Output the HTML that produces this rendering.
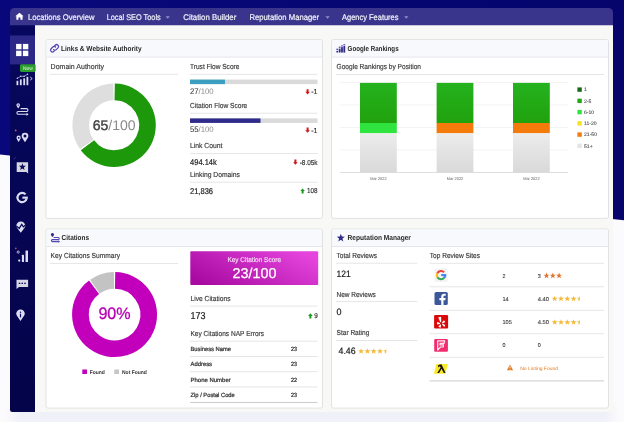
<!DOCTYPE html>
<html><head><meta charset="utf-8"><title>Dashboard</title>
<style>
html,body{margin:0;padding:0;width:624px;height:422px;overflow:hidden;background:#fbfbfd}
svg{display:block;position:absolute;left:0;top:0;will-change:transform}
text{font-family:"Liberation Sans",sans-serif;white-space:pre;text-rendering:geometricPrecision}
</style></head><body>
<svg width="624" height="422" viewBox="0 0 624 422">
<defs>
<linearGradient id="bgg" x1="0" x2="1" y1="0" y2="0"><stop offset="0" stop-color="#08087c"/><stop offset="1" stop-color="#05056c"/></linearGradient>
<linearGradient id="mg" x1="0" x2="1" y1=".75" y2=".25"><stop offset="0" stop-color="#a80aa2"/><stop offset="1" stop-color="#e545dc"/></linearGradient>
<linearGradient id="sb" x1="0" x2="0" y1="0" y2="1"><stop offset="0" stop-color="#07075e"/><stop offset="1" stop-color="#04044a"/></linearGradient>
<linearGradient id="gr" x1="0" x2="0" y1="0" y2="1"><stop offset="0" stop-color="#ececec"/><stop offset="1" stop-color="#d9d9d9"/></linearGradient>
<linearGradient id="gg" x1="0" x2="0" y1="0" y2="1"><stop offset="0" stop-color="#25b21f"/><stop offset="1" stop-color="#20a20c"/></linearGradient>
<filter id="bl" filterUnits="userSpaceOnUse" x="-10" y="-10" width="644" height="442" color-interpolation-filters="sRGB"><feConvolveMatrix order="3" kernelMatrix="0.03 0.11 0.03 0.11 0.44 0.11 0.03 0.11 0.03" edgeMode="duplicate" preserveAlpha="true"/></filter>
<filter id="sh" x="-5%" y="-5%" width="110%" height="115%"><feGaussianBlur stdDeviation="4"/></filter>
<clipPath id="wc"><path d="M10 409.500V12a4 4 0 0 1 4-4h595a4 4 0 0 1 4 4v397.500a2.500 2.500 0 0 1-2.500 2.500h-598a2.500 2.500 0 0 1-2.500-2.500z"/></clipPath>
</defs>

<g>
<rect x="-10" y="-10" width="644" height="442" fill="#fbfbfd"/>
<polygon points="-10,-10 634,-10 634,221.250 -10,153.450" fill="url(#bgg)"/>
<rect x="12" y="404" width="600" height="22" fill="#b8b8de" opacity=".16" filter="url(#sh)"/>
<path d="M35 25H613V409.500a2.500 2.500 0 0 1-2.500 2.500H35z" fill="#f8f8f6"/>
<path d="M10 25H35V412H12.500a2.500 2.500 0 0 1-2.500-2.500z" fill="url(#sb)"/>
<path d="M10 25.200V12.500a4.500 4.500 0 0 1 4.500-4.500H608.500a4.500 4.500 0 0 1 4.500 4.500V25.200z" fill="#39358d"/>
<rect x="10.00" y="35.40" width="25.00" height="29.00" fill="#2b2888"/>
<text x="28.00" y="19.97" font-size="8.2" fill="#f2f2fb" font-weight="400" textLength="66.50" lengthAdjust="spacingAndGlyphs" stroke="#f2f2fb" stroke-width=".2">Locations Overview</text>
<text x="106.70" y="19.97" font-size="8.2" fill="#f2f2fb" font-weight="400" textLength="54.00" lengthAdjust="spacingAndGlyphs" stroke="#f2f2fb" stroke-width=".2">Local SEO Tools</text>
<text x="183.30" y="19.97" font-size="8.2" fill="#f2f2fb" font-weight="400" textLength="53.00" lengthAdjust="spacingAndGlyphs" stroke="#f2f2fb" stroke-width=".2">Citation Builder</text>
<text x="249.40" y="19.97" font-size="8.2" fill="#f2f2fb" font-weight="400" textLength="69.80" lengthAdjust="spacingAndGlyphs" stroke="#f2f2fb" stroke-width=".2">Reputation Manager</text>
<text x="342.10" y="19.97" font-size="8.2" fill="#f2f2fb" font-weight="400" textLength="56.40" lengthAdjust="spacingAndGlyphs" stroke="#f2f2fb" stroke-width=".2">Agency Features</text>
<path d="M165.5 16.2h4.4l-2.2 2.6z" fill="#8e8bc8"/>
<path d="M325.40000000000003 16.2h4.4l-2.2 2.6z" fill="#8e8bc8"/>
<path d="M404.1 16.2h4.4l-2.2 2.6z" fill="#8e8bc8"/>
<path d="M19.45 12.7l4.1 3.6h-1v3.5h-2.1v-2.3h-2v2.3h-2.1v-3.5h-1z" fill="#fff"/>
<rect x="46" y="39.6" width="276.5" height="178.8" rx="2" fill="#fff" stroke="#e2e2e2" stroke-width="1"/>
<path d="M46.5 57.1V41.6a1.5 1.5 0 0 1 1.5-1.5H320.5a1.5 1.5 0 0 1 1.5 1.5V57.1z" fill="#f8f9fc"/>
<rect x="46.50" y="56.65" width="275.50" height="0.90" fill="#e4e4e8"/>
<rect x="331.5" y="39.6" width="277" height="178.8" rx="2" fill="#fff" stroke="#e2e2e2" stroke-width="1"/>
<path d="M332.0 57.1V41.6a1.5 1.5 0 0 1 1.5-1.5H606.5a1.5 1.5 0 0 1 1.5 1.5V57.1z" fill="#f8f9fc"/>
<rect x="332.00" y="56.65" width="276.00" height="0.90" fill="#e4e4e8"/>
<rect x="46" y="229" width="276.5" height="179.1" rx="2" fill="#fff" stroke="#e2e2e2" stroke-width="1"/>
<path d="M46.5 246.5V231a1.5 1.5 0 0 1 1.5-1.5H320.5a1.5 1.5 0 0 1 1.5 1.5V246.5z" fill="#f8f9fc"/>
<rect x="46.50" y="246.05" width="275.50" height="0.90" fill="#e4e4e8"/>
<rect x="331.5" y="229" width="277" height="179.1" rx="2" fill="#fff" stroke="#e2e2e2" stroke-width="1"/>
<path d="M332.0 246.5V231a1.5 1.5 0 0 1 1.5-1.5H606.5a1.5 1.5 0 0 1 1.5 1.5V246.5z" fill="#f8f9fc"/>
<rect x="332.00" y="246.05" width="276.00" height="0.90" fill="#e4e4e8"/>
<text x="61.10" y="51.05" font-size="7.3" fill="#262626" font-weight="700" textLength="80.50" lengthAdjust="spacingAndGlyphs">Links &amp; Website Authority</text>
<text x="50.60" y="69.25" font-size="7.3" fill="#3a3a3a" font-weight="400" textLength="53.40" lengthAdjust="spacingAndGlyphs" stroke="#3a3a3a" stroke-width="0.16">Domain Authority</text>
<rect x="50.00" y="73.85" width="128.00" height="0.90" fill="#e3e3e3"/>
<text x="190.00" y="69.25" font-size="7.3" fill="#3a3a3a" font-weight="400" textLength="49.40" lengthAdjust="spacingAndGlyphs" stroke="#3a3a3a" stroke-width="0.16">Trust Flow Score</text>
<rect x="190.00" y="73.85" width="127.50" height="0.90" fill="#e3e3e3"/>
<text x="190.00" y="108.35" font-size="7.3" fill="#3a3a3a" font-weight="400" textLength="57.30" lengthAdjust="spacingAndGlyphs" stroke="#3a3a3a" stroke-width="0.16">Citation Flow Score</text>
<rect x="190.00" y="112.75" width="127.50" height="0.90" fill="#e3e3e3"/>
<text x="190.00" y="148.16" font-size="7.3" fill="#3a3a3a" font-weight="400" textLength="32.50" lengthAdjust="spacingAndGlyphs" stroke="#3a3a3a" stroke-width="0.16">Link Count</text>
<rect x="190.00" y="153.15" width="127.50" height="0.90" fill="#e3e3e3"/>
<text x="190.00" y="177.06" font-size="7.3" fill="#3a3a3a" font-weight="400" textLength="50.00" lengthAdjust="spacingAndGlyphs" stroke="#3a3a3a" stroke-width="0.16">Linking Domains</text>
<rect x="190.00" y="181.75" width="127.50" height="0.90" fill="#e3e3e3"/>
<rect x="190.00" y="79.60" width="127.50" height="4.50" fill="#dadada"/>
<rect x="190.00" y="79.60" width="35.00" height="4.50" fill="#3c9fc2"/>
<rect x="190.00" y="118.40" width="127.50" height="4.50" fill="#dadada"/>
<rect x="190.00" y="118.40" width="70.50" height="4.50" fill="#2f2b8a"/>
<text x="190" y="93.90" font-size="8" textLength="23.7" lengthAdjust="spacingAndGlyphs"><tspan fill="#2a2a2a">27</tspan><tspan fill="#8a8a8a">/100</tspan></text>
<text x="190" y="132.30" font-size="8" textLength="23.7" lengthAdjust="spacingAndGlyphs"><tspan fill="#2a2a2a">55</tspan><tspan fill="#8a8a8a">/100</tspan></text>
<text x="190.00" y="164.91" font-size="8.3" fill="#222" font-weight="400" textLength="26.80" lengthAdjust="spacingAndGlyphs" stroke="#222" stroke-width="0.2">494.14k</text>
<text x="190.00" y="193.71" font-size="8.3" fill="#222" font-weight="400" textLength="23.00" lengthAdjust="spacingAndGlyphs" stroke="#222" stroke-width="0.2">21,836</text>
<path d="M307.6 94.39999999999999l2.3-2.6h-1.3v-2.6h-2v2.6h-1.3z" fill="#d01818"/>
<text x="311.20" y="94.12" font-size="7.2" fill="#333" font-weight="400" textLength="6.30" lengthAdjust="spacingAndGlyphs" stroke="#333" stroke-width="0.16">-1</text>
<path d="M307.6 132.79999999999998l2.3-2.6h-1.3v-2.6h-2v2.6h-1.3z" fill="#d01818"/>
<text x="311.20" y="132.52" font-size="7.2" fill="#333" font-weight="400" textLength="6.30" lengthAdjust="spacingAndGlyphs" stroke="#333" stroke-width="0.16">-1</text>
<path d="M295.4 164.79999999999998l2.3-2.6h-1.3v-2.6h-2v2.6h-1.3z" fill="#d01818"/>
<text x="299.70" y="164.52" font-size="7.2" fill="#333" font-weight="400" textLength="17.80" lengthAdjust="spacingAndGlyphs" stroke="#333" stroke-width="0.16">-8.05k</text>
<path d="M302.6 188.4l2.3 2.6h-1.3v2.6h-2v-2.6h-1.3z" fill="#1e9a1e"/>
<text x="307.00" y="193.32" font-size="7.2" fill="#333" font-weight="400" textLength="10.50" lengthAdjust="spacingAndGlyphs" stroke="#333" stroke-width="0.16">108</text>
<path d="M114.68 91.86A33.35 33.35 0 1 1 87.47 145.27" fill="none" stroke="#1c980a" stroke-width="16.7"/>
<path d="M86.78 144.33A33.35 33.35 0 0 1 113.52 91.86" fill="none" stroke="#dedede" stroke-width="16.7"/>
<text x="92.7" y="130.1" font-size="14" textLength="43" lengthAdjust="spacingAndGlyphs"><tspan fill="#444" stroke="#444" stroke-width=".45">65</tspan><tspan fill="#8a8a8a">/100</tspan></text>
<text x="347.60" y="51.05" font-size="7.3" fill="#262626" font-weight="700" textLength="51.00" lengthAdjust="spacingAndGlyphs">Google Rankings</text>
<text x="336.60" y="69.25" font-size="7.3" fill="#3a3a3a" font-weight="400" textLength="84.40" lengthAdjust="spacingAndGlyphs" stroke="#3a3a3a" stroke-width="0.16">Google Rankings by Position</text>
<rect x="336.00" y="73.95" width="268.00" height="0.90" fill="#e3e3e3"/>
<rect x="340.00" y="82.10" width="228.00" height="0.80" fill="#f0f0f0"/>
<rect x="340.00" y="104.60" width="228.00" height="0.80" fill="#f0f0f0"/>
<rect x="340.00" y="127.10" width="228.00" height="0.80" fill="#f0f0f0"/>
<rect x="340.00" y="149.60" width="228.00" height="0.80" fill="#f0f0f0"/>
<rect x="340.00" y="172.20" width="228.00" height="0.80" fill="#d6d6d6"/>
<rect x="360.00" y="82.90" width="36.80" height="40.20" fill="url(#gg)"/>
<rect x="360.00" y="123.00" width="36.80" height="10.30" fill="#2fe43e"/>
<rect x="360.00" y="133.30" width="36.80" height="39.20" fill="url(#gr)"/>
<text x="370.20" y="180.03" font-size="4.1" fill="#5a5a5a" font-weight="400" textLength="16.40" lengthAdjust="spacingAndGlyphs" stroke="none">Mar 2022</text>
<rect x="436.60" y="82.90" width="36.80" height="40.20" fill="url(#gg)"/>
<rect x="436.60" y="123.00" width="36.80" height="10.30" fill="#f57a0c"/>
<rect x="436.60" y="133.30" width="36.80" height="39.20" fill="url(#gr)"/>
<text x="446.80" y="180.03" font-size="4.1" fill="#5a5a5a" font-weight="400" textLength="16.40" lengthAdjust="spacingAndGlyphs" stroke="none">Mar 2022</text>
<rect x="513.00" y="82.90" width="36.80" height="40.20" fill="url(#gg)"/>
<rect x="513.00" y="123.00" width="36.80" height="10.30" fill="#f57a0c"/>
<rect x="513.00" y="133.30" width="36.80" height="39.20" fill="url(#gr)"/>
<text x="523.20" y="180.03" font-size="4.1" fill="#5a5a5a" font-weight="400" textLength="16.40" lengthAdjust="spacingAndGlyphs" stroke="none">Mar 2022</text>
<rect x="577.40" y="87.40" width="4.40" height="4.40" fill="#176b17"/>
<text x="584.00" y="91.38" font-size="5.1" fill="#444" font-weight="400" stroke="#444" stroke-width=".08">1</text>
<rect x="577.40" y="98.65" width="4.40" height="4.40" fill="#22a61a"/>
<text x="584.00" y="102.63" font-size="5.1" fill="#444" font-weight="400" stroke="#444" stroke-width=".08">2-5</text>
<rect x="577.40" y="109.90" width="4.40" height="4.40" fill="#2fe43e"/>
<text x="584.00" y="113.88" font-size="5.1" fill="#444" font-weight="400" stroke="#444" stroke-width=".08">6-10</text>
<rect x="577.40" y="121.15" width="4.40" height="4.40" fill="#f6e21e"/>
<text x="584.00" y="125.13" font-size="5.1" fill="#444" font-weight="400" stroke="#444" stroke-width=".08">11-20</text>
<rect x="577.40" y="132.40" width="4.40" height="4.40" fill="#f57a0c"/>
<text x="584.00" y="136.38" font-size="5.1" fill="#444" font-weight="400" stroke="#444" stroke-width=".08">21-50</text>
<rect x="577.40" y="143.65" width="4.40" height="4.40" fill="#e4e4e4"/>
<text x="584.00" y="147.63" font-size="5.1" fill="#444" font-weight="400" stroke="#444" stroke-width=".08">51+</text>
<text x="61.60" y="240.16" font-size="7.3" fill="#262626" font-weight="700" textLength="27.40" lengthAdjust="spacingAndGlyphs">Citations</text>
<text x="50.60" y="258.45" font-size="7.3" fill="#3a3a3a" font-weight="400" textLength="69.40" lengthAdjust="spacingAndGlyphs" stroke="#3a3a3a" stroke-width="0.16">Key Citations Summary</text>
<rect x="50.00" y="263.15" width="128.00" height="0.90" fill="#e3e3e3"/>
<path d="M115.09 280.45A34.15 34.15 0 1 1 94.05 287.29" fill="none" stroke="#c200bc" stroke-width="16.7"/>
<path d="M94.91 286.66A34.15 34.15 0 0 1 114.01 280.45" fill="none" stroke="#c3c3c3" stroke-width="16.7"/>
<text x="98.40" y="319.07" font-size="16.5" fill="#b800b4" font-weight="400" textLength="32.30" lengthAdjust="spacingAndGlyphs" stroke="#b800b4" stroke-width=".3">90%</text>
<rect x="82.30" y="369.50" width="4.70" height="4.50" fill="#c200bc"/>
<text x="89.80" y="373.99" font-size="5.4" fill="#333" font-weight="700" textLength="15.10" lengthAdjust="spacingAndGlyphs">Found</text>
<rect x="114.30" y="369.50" width="4.70" height="4.50" fill="#c6c6c6"/>
<text x="122.00" y="373.99" font-size="5.4" fill="#333" font-weight="700" textLength="24.90" lengthAdjust="spacingAndGlyphs">Not Found</text>
<rect x="190.30" y="251.30" width="127.90" height="33.70" fill="url(#mg)" rx="1"/>
<text x="227.40" y="262.18" font-size="6.8" fill="#f8dcf6" font-weight="400" textLength="53.60" lengthAdjust="spacingAndGlyphs" stroke="#f8dcf6" stroke-width="0.16">Key Citation Score</text>
<text x="232.50" y="278.17" font-size="14.2" fill="#fff" font-weight="400" textLength="43.90" lengthAdjust="spacingAndGlyphs" stroke="#fff" stroke-width=".25">23/100</text>
<text x="190.50" y="301.45" font-size="7.3" fill="#3a3a3a" font-weight="400" textLength="40.00" lengthAdjust="spacingAndGlyphs" stroke="#3a3a3a" stroke-width="0.16">Live Citations</text>
<rect x="190.00" y="305.65" width="127.50" height="0.90" fill="#e3e3e3"/>
<text x="190.60" y="319.10" font-size="10" fill="#222" font-weight="400" textLength="15.00" lengthAdjust="spacingAndGlyphs" stroke="#222" stroke-width="0.2">173</text>
<path d="M310.4 313.29999999999995l2.3 2.6h-1.3v2.6h-2v-2.6h-1.3z" fill="#1e9a1e"/>
<text x="314.20" y="318.22" font-size="7.2" fill="#333" font-weight="400" textLength="3.50" lengthAdjust="spacingAndGlyphs" stroke="#333" stroke-width="0.16">9</text>
<text x="190.50" y="335.75" font-size="7.3" fill="#3a3a3a" font-weight="400" textLength="73.50" lengthAdjust="spacingAndGlyphs" stroke="#3a3a3a" stroke-width="0.16">Key Citations NAP Errors</text>
<rect x="190.00" y="340.75" width="127.50" height="0.90" fill="#e3e3e3"/>
<text x="190.50" y="351.10" font-size="6" fill="#2e2e2e" font-weight="400" textLength="40.50" lengthAdjust="spacingAndGlyphs" stroke="#2e2e2e" stroke-width="0.22">Business Name</text>
<text x="291.00" y="351.10" font-size="6" fill="#2e2e2e" font-weight="400" textLength="6.00" lengthAdjust="spacingAndGlyphs" stroke="#2e2e2e" stroke-width="0.22">23</text>
<rect x="190.00" y="356.05" width="127.50" height="0.90" fill="#e3e3e3"/>
<text x="190.50" y="366.35" font-size="6" fill="#2e2e2e" font-weight="400" textLength="21.50" lengthAdjust="spacingAndGlyphs" stroke="#2e2e2e" stroke-width="0.22">Address</text>
<text x="291.00" y="366.35" font-size="6" fill="#2e2e2e" font-weight="400" textLength="6.00" lengthAdjust="spacingAndGlyphs" stroke="#2e2e2e" stroke-width="0.22">23</text>
<rect x="190.00" y="371.30" width="127.50" height="0.90" fill="#e3e3e3"/>
<text x="190.50" y="381.60" font-size="6" fill="#2e2e2e" font-weight="400" textLength="40.20" lengthAdjust="spacingAndGlyphs" stroke="#2e2e2e" stroke-width="0.22">Phone Number</text>
<text x="291.00" y="381.60" font-size="6" fill="#2e2e2e" font-weight="400" textLength="6.00" lengthAdjust="spacingAndGlyphs" stroke="#2e2e2e" stroke-width="0.22">22</text>
<rect x="190.00" y="386.55" width="127.50" height="0.90" fill="#e3e3e3"/>
<text x="190.50" y="396.85" font-size="6" fill="#2e2e2e" font-weight="400" textLength="44.30" lengthAdjust="spacingAndGlyphs" stroke="#2e2e2e" stroke-width="0.22">Zip / Postal Code</text>
<text x="291.00" y="396.85" font-size="6" fill="#2e2e2e" font-weight="400" textLength="6.00" lengthAdjust="spacingAndGlyphs" stroke="#2e2e2e" stroke-width="0.22">23</text>
<rect x="190.00" y="401.95" width="127.50" height="1.10" fill="#cfcfcf"/>
<text x="347.60" y="240.25" font-size="7.3" fill="#262626" font-weight="700" textLength="63.30" lengthAdjust="spacingAndGlyphs">Reputation Manager</text>
<text x="336.60" y="258.25" font-size="7.3" fill="#3a3a3a" font-weight="400" textLength="40.40" lengthAdjust="spacingAndGlyphs" stroke="#3a3a3a" stroke-width="0.16">Total Reviews</text>
<rect x="336.00" y="262.75" width="81.30" height="0.90" fill="#e3e3e3"/>
<text x="336.60" y="276.52" font-size="9.2" fill="#222" font-weight="400" textLength="14.20" lengthAdjust="spacingAndGlyphs" stroke="#222" stroke-width="0.2">121</text>
<text x="336.60" y="296.75" font-size="7.3" fill="#3a3a3a" font-weight="400" textLength="39.20" lengthAdjust="spacingAndGlyphs" stroke="#3a3a3a" stroke-width="0.16">New Reviews</text>
<rect x="336.00" y="301.15" width="81.30" height="0.90" fill="#e3e3e3"/>
<text x="336.60" y="314.72" font-size="9.2" fill="#222" font-weight="400" textLength="5.00" lengthAdjust="spacingAndGlyphs" stroke="#222" stroke-width="0.2">0</text>
<text x="336.60" y="335.36" font-size="7.3" fill="#3a3a3a" font-weight="400" textLength="32.70" lengthAdjust="spacingAndGlyphs" stroke="#3a3a3a" stroke-width="0.16">Star Rating</text>
<rect x="336.00" y="340.05" width="81.30" height="0.90" fill="#e3e3e3"/>
<text x="338.50" y="354.42" font-size="9.2" fill="#1c1c1c" font-weight="400" textLength="17.10" lengthAdjust="spacingAndGlyphs" stroke="#1c1c1c" stroke-width="0.2">4.46</text>
<text x="429.80" y="258.25" font-size="7.3" fill="#3a3a3a" font-weight="400" textLength="50.20" lengthAdjust="spacingAndGlyphs" stroke="#3a3a3a" stroke-width="0.16">Top Review Sites</text>
<rect x="429.50" y="262.85" width="174.50" height="0.90" fill="#e3e3e3"/>
<rect x="429.50" y="286.35" width="174.50" height="0.90" fill="#e3e3e3"/>
<rect x="429.50" y="309.85" width="174.50" height="0.90" fill="#e3e3e3"/>
<rect x="429.50" y="333.25" width="174.50" height="0.90" fill="#e3e3e3"/>
<rect x="429.50" y="356.85" width="174.50" height="0.90" fill="#e3e3e3"/>
<rect x="429.50" y="380.35" width="174.50" height="1.10" fill="#cfcfcf"/>
<path d="M361.10 348.20L361.87 350.25L364.05 350.34L362.34 351.70L362.92 353.81L361.10 352.60L359.28 353.81L359.86 351.70L358.15 350.34L360.33 350.25z" fill="#f6b93a"/>
<path d="M367.40 348.20L368.17 350.25L370.35 350.34L368.64 351.70L369.22 353.81L367.40 352.60L365.58 353.81L366.16 351.70L364.45 350.34L366.63 350.25z" fill="#f6b93a"/>
<path d="M373.70 348.20L374.47 350.25L376.65 350.34L374.94 351.70L375.52 353.81L373.70 352.60L371.88 353.81L372.46 351.70L370.75 350.34L372.93 350.25z" fill="#f6b93a"/>
<path d="M380.00 348.20L380.77 350.25L382.95 350.34L381.24 351.70L381.82 353.81L380.00 352.60L378.18 353.81L378.76 351.70L377.05 350.34L379.23 350.25z" fill="#f6b93a"/>
<path d="M386.30 348.20L386.30 352.60L384.48 353.81L385.06 351.70L383.35 350.34L385.53 350.25z" fill="#f6b93a"/>
<text x="502.40" y="277.56" font-size="5.6" fill="#333" font-weight="400" textLength="3.00" lengthAdjust="spacingAndGlyphs" stroke="#333" stroke-width=".08">2</text>
<text x="537.70" y="277.56" font-size="5.6" fill="#333" font-weight="400" textLength="3.00" lengthAdjust="spacingAndGlyphs" stroke="#333" stroke-width=".08">3</text>
<path d="M546.50 272.60L547.27 274.65L549.45 274.74L547.74 276.10L548.32 278.21L546.50 277.00L544.68 278.21L545.26 276.10L543.55 274.74L545.73 274.65z" fill="#e0722a"/>
<path d="M552.80 272.60L553.57 274.65L555.75 274.74L554.04 276.10L554.62 278.21L552.80 277.00L550.98 278.21L551.56 276.10L549.85 274.74L552.03 274.65z" fill="#e0722a"/>
<path d="M559.10 272.60L559.87 274.65L562.05 274.74L560.34 276.10L560.92 278.21L559.10 277.00L557.28 278.21L557.86 276.10L556.15 274.74L558.33 274.65z" fill="#e0722a"/>
<text x="502.40" y="300.66" font-size="5.6" fill="#333" font-weight="400" textLength="6.30" lengthAdjust="spacingAndGlyphs" stroke="#333" stroke-width=".08">14</text>
<text x="537.70" y="300.66" font-size="5.6" fill="#333" font-weight="400" textLength="11.30" lengthAdjust="spacingAndGlyphs" stroke="#333" stroke-width=".08">4.40</text>
<path d="M554.70 295.70L555.47 297.75L557.65 297.84L555.94 299.20L556.52 301.31L554.70 300.10L552.88 301.31L553.46 299.20L551.75 297.84L553.93 297.75z" fill="#f6b93a"/>
<path d="M561.00 295.70L561.77 297.75L563.95 297.84L562.24 299.20L562.82 301.31L561.00 300.10L559.18 301.31L559.76 299.20L558.05 297.84L560.23 297.75z" fill="#f6b93a"/>
<path d="M567.30 295.70L568.07 297.75L570.25 297.84L568.54 299.20L569.12 301.31L567.30 300.10L565.48 301.31L566.06 299.20L564.35 297.84L566.53 297.75z" fill="#f6b93a"/>
<path d="M573.60 295.70L574.37 297.75L576.55 297.84L574.84 299.20L575.42 301.31L573.60 300.10L571.78 301.31L572.36 299.20L570.65 297.84L572.83 297.75z" fill="#f6b93a"/>
<path d="M579.90 295.70L579.90 300.10L578.08 301.31L578.66 299.20L576.95 297.84L579.13 297.75z" fill="#f6b93a"/>
<text x="502.40" y="324.16" font-size="5.6" fill="#333" font-weight="400" textLength="9.40" lengthAdjust="spacingAndGlyphs" stroke="#333" stroke-width=".08">105</text>
<text x="537.70" y="324.16" font-size="5.6" fill="#333" font-weight="400" textLength="11.30" lengthAdjust="spacingAndGlyphs" stroke="#333" stroke-width=".08">4.50</text>
<path d="M554.70 319.20L555.47 321.25L557.65 321.34L555.94 322.70L556.52 324.81L554.70 323.60L552.88 324.81L553.46 322.70L551.75 321.34L553.93 321.25z" fill="#f6b93a"/>
<path d="M561.00 319.20L561.77 321.25L563.95 321.34L562.24 322.70L562.82 324.81L561.00 323.60L559.18 324.81L559.76 322.70L558.05 321.34L560.23 321.25z" fill="#f6b93a"/>
<path d="M567.30 319.20L568.07 321.25L570.25 321.34L568.54 322.70L569.12 324.81L567.30 323.60L565.48 324.81L566.06 322.70L564.35 321.34L566.53 321.25z" fill="#f6b93a"/>
<path d="M573.60 319.20L574.37 321.25L576.55 321.34L574.84 322.70L575.42 324.81L573.60 323.60L571.78 324.81L572.36 322.70L570.65 321.34L572.83 321.25z" fill="#f6b93a"/>
<path d="M579.90 319.20L579.90 323.60L578.08 324.81L578.66 322.70L576.95 321.34L579.13 321.25z" fill="#f6b93a"/>
<text x="502.40" y="347.16" font-size="5.6" fill="#333" font-weight="400" textLength="3.00" lengthAdjust="spacingAndGlyphs" stroke="#333" stroke-width=".08">0</text>
<text x="537.70" y="347.16" font-size="5.6" fill="#333" font-weight="400" textLength="3.00" lengthAdjust="spacingAndGlyphs" stroke="#333" stroke-width=".08">0</text>
<path d="M510 364.4l3.1 5.8h-6.2z" fill="#e07a20"/><rect x="509.6" y="366.2" width=".8" height="2" fill="#fff"/><rect x="509.6" y="368.7" width=".8" height=".8" fill="#fff"/>
<text x="520.20" y="369.58" font-size="4.8" fill="#e07a20" font-weight="400" textLength="37.90" lengthAdjust="spacingAndGlyphs" stroke="none">No Listing Found</text>
<rect x="16.1" y="43.9" width="5.4" height="5.4" fill="#fff"/>
<rect x="22.9" y="43.9" width="5.4" height="5.4" fill="#fff"/>
<rect x="16.1" y="50.7" width="5.4" height="5.4" fill="#fff"/>
<rect x="22.9" y="50.7" width="5.4" height="5.4" fill="#fff"/>
<rect x="20" y="64.2" width="15.6" height="7.8" rx="1.4" fill="#2c9c2c"/>
<text x="23" y="70" font-size="5.2" fill="#e8ffe8" textLength="9.8" lengthAdjust="spacingAndGlyphs">New</text>
<g fill="#dcdcf2"><rect x="16.5" y="80.800" width="1.800" height="4.400"/><rect x="19.900" y="79.400" width="1.800" height="5.800"/><rect x="23.300" y="78.300" width="1.800" height="6.900"/><rect x="26.500" y="76.800" width="1.800" height="8.400"/></g>
<path d="M17.300 78.300L20.700 76.300L24.100 76.300L27.500 74.300" fill="none" stroke="#dcdcf2" stroke-width=".6"/>
<g fill="#dcdcf2"><circle cx="17.300" cy="78.300" r=".700"/><circle cx="20.700" cy="76.300" r=".700"/><circle cx="24.100" cy="76.300" r=".700"/><circle cx="27.500" cy="74.300" r=".700"/></g>
<path d="M30.2 77l2 1.6l-2 1.6" fill="none" stroke="#dcdcf2" stroke-width=".9"/>
<path d="M18.2 108.4c-1.3-1.700-1.800-2.500-1.800-3.300a1.800 1.800 0 0 1 3.600 0c0 .800-.500 1.600-1.800 3.300z" fill="#dcdcf2"/><circle cx="18.2" cy="105.100" r=".650" fill="#050552"/>
<path d="M20.6 108.600H26.500a1.450 1.450 0 0 1 0 2.900H18.300a1.400 1.400 0 0 0 0 2.800H26.800" fill="none" stroke="#dcdcf2" stroke-width="1.050"/>
<path d="M26.500 112.700l2.100 1.600l-2.100 1.600z" fill="#dcdcf2"/>
<path d="M18.6 142.0C17.445 139.952 16.5 138.928 16.5 137.7a2.1 2.1 0 0 1 4.2 0C20.700000000000003 138.928 19.755000000000003 139.952 18.6 142.0z" fill="#dcdcf2"/>
<circle cx="18.7" cy="137.8" r=".9" fill="#06065a"/>
<path d="M25 142.29999999999998C23.13 139.22799999999998 21.6 137.69199999999998 21.6 136.1a3.4 3.4 0 0 1 6.8 0C28.4 137.69199999999998 26.87 139.22799999999998 25 142.29999999999998z" fill="#dcdcf2"/>
<circle cx="25" cy="136.1" r="1.5" fill="#06065a"/>
<circle cx="15.7" cy="130.4" r=".9" fill="#e0507a"/>
<path d="M16.7 162.200H28.100V173.600L26.300 172.100H16.700z" fill="#d6d6e0"/>
<path d="M22.40 163.30L23.31 165.75L25.92 165.86L23.87 167.48L24.57 169.99L22.40 168.55L20.23 169.99L20.93 167.48L18.88 165.86L21.49 165.75z" fill="#0a0a60"/>
<path d="M13.6 159.2l2.2-1.8" stroke="#7040a8" stroke-width=".6"/>
<path d="M25.56 194.39A4.65 4.65 0 1 0 26.65 198.47" fill="none" stroke="#dcdcf2" stroke-width="2.150"/>
<rect x="22.400000000000002" y="196.6" width="5.45" height="2.100" fill="#dcdcf2"/>
<path d="M20.8 232.8C18.325 229.15200000000002 16.3 227.328 16.3 225.9a4.5 4.5 0 0 1 9 0C25.3 227.328 23.275000000000002 229.15200000000002 20.8 232.8z" fill="#dcdcf2"/>
<path d="M16.300 226l3 2.400l2.400-4l1.700 2.500l2-1.900" fill="none" stroke="#050552" stroke-width="1.150"/>
<g fill="#dcdcf2"><circle cx="19.2" cy="260.600" r="1.150"/><rect x="21.9" y="254.8" width="2.100" height="7.200" rx=".5"/><rect x="25.5" y="250.6" width="2.500" height="11.400" rx=".5"/></g>
<circle cx="18.2" cy="252.1" r="1.100" fill="none" stroke="#dcdcf2" stroke-width=".8"/>
<circle cx="15.8" cy="248.3" r=".9" fill="#c05050"/>
<path d="M16.5 279.750H28.100V287H19L16.500 289z" fill="#d8d8e4"/>
<g fill="#0a0a60"><rect x="18.8" y="282.7" width="1.5" height="1.300"/><rect x="21.5" y="282.7" width="1.5" height="1.300"/><rect x="24.2" y="282.7" width="1.5" height="1.300"/></g>
<path d="M20.5 321.0C18.134999999999998 317.32 16.2 315.48 16.2 313.8a4.3 4.3 0 0 1 8.6 0C24.8 315.48 22.865000000000002 317.32 20.5 321.0z" fill="#dcdcf2"/>
<rect x="19.9" y="313.7" width="1.2" height="3.700" fill="#0a0a60"/><circle cx="20.5" cy="312.300" r=".75" fill="#0a0a60"/>
<g fill="none" stroke="#5147ac" stroke-width="1.250" stroke-linecap="round"><path d="M53.6 49.6a1.900 1.900 0 0 0 2.700 0l1.700-1.700a1.900 1.900 0 0 0-2.700-2.700l-.6.600"/><path d="M55.500 47a1.900 1.900 0 0 0-2.700 0l-1.700 1.700a1.900 1.900 0 0 0 2.700 2.700l.600-.600"/></g>
<g fill="#2f2a86"><rect x="336.400" y="50.900" width="1.750" height="1.600"/><rect x="336.400" y="48.600" width="1.750" height="1.500" fill="#5a50c0"/><rect x="338.800" y="48.600" width="1.800" height="3.900"/><rect x="338.800" y="46.600" width="1.800" height="1.300" fill="#5a50c0"/><rect x="341.100" y="47.100" width="1.800" height="5.400"/><rect x="341.100" y="45.300" width="1.800" height="1.200" fill="#5a50c0"/><rect x="343.400" y="45.900" width="1.800" height="6.700"/><rect x="343.400" y="44.100" width="1.800" height="1.200" fill="#5a50c0"/></g>
<path d="M52.450 237.100c-1.150-1.400-1.600-2-1.600-2.600a1.600 1.600 0 0 1 3.200 0c0 .600-.450 1.200-1.600 2.600z" fill="#2f2a86"/>
<path d="M53.600 237.500H58.200a1.050 1.050 0 0 1 0 2.100H52.400a1 1 0 0 0 0 2H58.400" fill="none" stroke="#5147ac" stroke-width="1.050"/>
<path d="M58.200 240.300l1.900 1.300l-1.900 1.300z" fill="#5147ac"/>
<path d="M340.80 233.70L341.83 236.58L344.89 236.67L342.46 238.54L343.33 241.48L340.80 239.75L338.27 241.48L339.14 238.54L336.71 236.67L339.77 236.58z" fill="#2f2a86"/>
<rect x="434.7" y="268.600" width="12.900" height="13.300" rx="1" fill="#f3f3f3"/>
<path d="M437.34 273.15A4.15 4.15 0 0 1 444.08 272.32" fill="none" stroke="#ea4335" stroke-width="2.100"/>
<path d="M437.48 277.30A4.15 4.15 0 0 1 437.34 273.15" fill="none" stroke="#fbbc05" stroke-width="2.100"/>
<path d="M444.27 277.65A4.15 4.15 0 0 1 437.41 277.18" fill="none" stroke="#34a853" stroke-width="2.100"/>
<path d="M445.15 274.96A4.15 4.15 0 0 1 444.18 277.77" fill="none" stroke="#4285f4" stroke-width="2.100"/>
<rect x="441.2" y="274.05" width="5" height="2.100" fill="#4285f4"/>
<rect x="434.500" y="291.900" width="13.300" height="13.200" rx="1.600" fill="#3b5998"/>
<path d="M443.500 305.100v-4.900h1.800l.300-2.150h-2.100v-1.300c0-.650.200-1.050 1.100-1.050h1.100v-1.900c-.200-.030-.900-.100-1.650-.100c-1.650 0-2.800 1-2.800 2.850v1.500h-1.850v2.150h1.850v4.900z" fill="#fff"/>
<rect x="434.100" y="315.100" width="14" height="13.400" rx="1.100" fill="#da0808"/>
<g fill="#fff"><path d="M438.200 317.600q1.400-.800 2.900-.800l.150 5.100l-.950.350z"/><path d="M437.100 322l3 1.050q.100.500-.100.950l-2.800.400q-.350-1.200-.100-2.400z"/><path d="M438.300 326.500l2-2l.800.450l-.450 2.750q-1.300-.250-2.350-1.200z"/><path d="M442 324.400l.600-.750l2.700 1.250q-.300 1.150-1.100 2z"/><path d="M441.900 322.750l1.900-2.600q1.050.800 1.550 1.950l-2.950 1.350z"/></g>
<rect x="434.200" y="338.900" width="13.700" height="12.900" rx="1.100" fill="#f02c6e"/>
<path d="M437.700 340.900h7l-.600 2.500h-4.100v1.500h3.600l-.500 2.100h-2.600l-2.800 3.100z" fill="none" stroke="#ffe8f0" stroke-width="1.200" stroke-linejoin="round"/>
<path d="M436.400 364h11.500l-2.600 9.800h-11.500z" fill="#f8ea28"/>
<path d="M438.300 365l3.100-.700l1.500 2.900l2.600 5.800h-1.700l-2.200-4.200l-2.500 4.200h-1.800l3.300-5.600l-.800-1.200l-1.800 1.400z" fill="#1a1208"/>
</g></svg></body></html>
